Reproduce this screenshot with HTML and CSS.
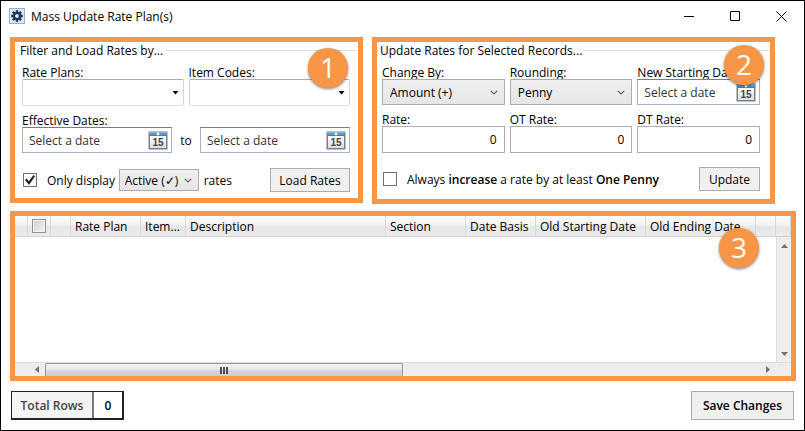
FILE: index.html
```html
<!DOCTYPE html>
<html lang="en">
<head>
  <meta charset="UTF-8" />
  <meta name="viewport" content="width=device-width, initial-scale=1.0" />
  <title>Mass Update Rate Plan(s)</title>
  <link rel="stylesheet" href="styles.css">
</head>
<body>
<svg width="0" height="0" class="defs" aria-hidden="true">
  <defs>
    <linearGradient id="cal-blue" x1="0" y1="0" x2="0" y2="1">
      <stop offset="0" stop-color="#8ab4dc" />
      <stop offset="1" stop-color="#3a78b4" />
    </linearGradient>
    <linearGradient id="cal-page" x1="0" y1="0" x2="0" y2="1">
      <stop offset="0" stop-color="#ffffff" />
      <stop offset="1" stop-color="#dcdcdc" />
    </linearGradient>
    <symbol id="calendar" viewBox="0 0 20 19">
      <rect x="0.5" y="0.5" width="19" height="18" fill="#7b7f86" />
      <rect x="1" y="1" width="18" height="4" fill="url(#cal-blue)" />
      <circle cx="10" cy="3" r="1.4" fill="#fff" />
      <rect x="2" y="5" width="16" height="12" fill="url(#cal-page)" />
      <text x="10" y="15" text-anchor="middle" class="cal-num">15</text>
    </symbol>
    <symbol id="triangle" viewBox="0 0 7 4"><path d="M0.5 0h6L3.5 3.5z" fill="#000" /></symbol>
    <symbol id="chevron" viewBox="0 0 8 5"><path d="M0.8 0.8L4 4 7.2 0.8" fill="none" stroke="#606060" stroke-width="1.2" /></symbol>
  </defs>
</svg>

<div class="window">
  <header class="titlebar">
    <svg class="app-icon" width="16" height="16" viewBox="0 0 16 16" aria-hidden="true">
      <rect x="0.5" y="0.5" width="15" height="15" fill="#dce6f0" stroke="#9fb0c4" />
      <g stroke="#17365d" stroke-width="2.4">
        <path d="M8 2.2v11.6M2.2 8h11.6M3.9 3.9l8.2 8.2M12.1 3.9l-8.2 8.2" />
      </g>
      <circle cx="8" cy="8" r="4" fill="#17365d" />
      <circle cx="8" cy="8" r="1.9" fill="#dce6f0" />
    </svg>
    <h1>Mass Update Rate Plan(s)</h1>
    <div class="window-buttons">
      <button type="button" aria-label="Minimize"><svg width="11" height="11" viewBox="0 0 11 11"><path d="M0 5.5h10" /></svg></button>
      <button type="button" aria-label="Maximize"><svg width="11" height="11" viewBox="0 0 11 11"><path d="M0.5 0.5h9v9h-9z" /></svg></button>
      <button type="button" aria-label="Close"><svg width="11" height="11" viewBox="0 0 11 11"><path d="M0.5 0.5l10 10M10.5 0.5l-10 10" /></svg></button>
    </div>
  </header>

  <main>
    <div class="panels">
      <section class="panel panel-filter">
        <span class="badge">1</span>
        <fieldset>
          <legend>Filter and Load Rates by...</legend>
          <div class="row">
            <div class="field">
              <label for="rate-plans">Rate Plans:</label>
              <div class="control combo">
                <select id="rate-plans"><option></option></select>
                <svg class="arrow" width="7" height="4"><use href="#triangle" /></svg>
              </div>
            </div>
            <div class="field">
              <label for="item-codes">Item Codes:</label>
              <div class="control combo">
                <select id="item-codes"><option></option></select>
                <svg class="arrow" width="7" height="4"><use href="#triangle" /></svg>
              </div>
            </div>
          </div>
          <div class="dates">
            <div class="field">
              <label for="date-from">Effective Dates:</label>
              <div class="control date">
                <input type="text" id="date-from" placeholder="Select a date" />
                <button type="button" aria-label="Open calendar"><svg width="20" height="19"><use href="#calendar" /></svg></button>
              </div>
            </div>
            <label class="to" for="date-to">to</label>
            <div class="field">
              <div class="control date">
                <input type="text" id="date-to" placeholder="Select a date" />
                <button type="button" aria-label="Open calendar"><svg width="20" height="19"><use href="#calendar" /></svg></button>
              </div>
            </div>
          </div>
          <div class="actions">
            <input type="checkbox" id="only" checked />
            <label for="only">Only display</label>
            <div class="drop status">
              <select id="status" aria-label="Status"><option>Active (✓)</option></select>
              <svg class="arrow" width="8" height="5"><use href="#chevron" /></svg>
            </div>
            <label for="status">rates</label>
            <button type="button" class="btn btn-load">Load Rates</button>
          </div>
        </fieldset>
      </section>

      <section class="panel panel-update">
        <span class="badge">2</span>
        <fieldset>
          <legend>Update Rates for Selected Records...</legend>
          <div class="row">
            <div class="field">
              <label for="change-by">Change By:</label>
              <div class="control drop">
                <select id="change-by"><option>Amount (+)</option></select>
                <svg class="arrow" width="8" height="5"><use href="#chevron" /></svg>
              </div>
            </div>
            <div class="field">
              <label for="rounding">Rounding:</label>
              <div class="control drop">
                <select id="rounding"><option>Penny</option></select>
                <svg class="arrow" width="8" height="5"><use href="#chevron" /></svg>
              </div>
            </div>
            <div class="field">
              <label for="new-start">New Starting Date:</label>
              <div class="control date">
                <input type="text" id="new-start" placeholder="Select a date" />
                <button type="button" aria-label="Open calendar"><svg width="20" height="19"><use href="#calendar" /></svg></button>
              </div>
            </div>
          </div>
          <div class="row">
            <div class="field">
              <label for="rate">Rate:</label>
              <input type="text" class="control number" id="rate" value="0" />
            </div>
            <div class="field">
              <label for="ot-rate">OT Rate:</label>
              <input type="text" class="control number" id="ot-rate" value="0" />
            </div>
            <div class="field">
              <label for="dt-rate">DT Rate:</label>
              <input type="text" class="control number" id="dt-rate" value="0" />
            </div>
          </div>
          <div class="actions">
            <input type="checkbox" id="always" />
            <label for="always">Always <b>increase</b> a rate by at least <b>One Penny</b></label>
            <button type="button" class="btn btn-update">Update</button>
          </div>
        </fieldset>
      </section>
    </div>

    <section class="panel panel-grid">
      <span class="badge">3</span>
      <table>
        <colgroup>
          <col class="c-edge"><col class="c-check"><col class="c-gap"><col class="c-plan"><col class="c-item"><col class="c-desc">
          <col class="c-section"><col class="c-basis"><col class="c-date"><col class="c-date"><col class="c-gap"><col>
        </colgroup>
        <thead>
          <tr>
            <th></th>
            <th><input type="checkbox" aria-label="Select all" /></th>
            <th></th>
            <th>Rate Plan</th>
            <th>Item...</th>
            <th>Description</th>
            <th>Section</th>
            <th>Date Basis</th>
            <th>Old Starting Date</th>
            <th>Old Ending Date</th>
            <th></th>
            <th></th>
          </tr>
        </thead>
      </table>
      <div class="grid-body">
        <div class="grid-rows"></div>
        <div class="scroll-v">
          <svg width="7" height="4" viewBox="0 0 7 4"><path d="M0 4h7L3.5 0z" /></svg>
          <svg width="7" height="4" viewBox="0 0 7 4"><path d="M0 0h7L3.5 4z" /></svg>
        </div>
      </div>
      <div class="scroll-h">
        <svg width="4" height="7" viewBox="0 0 4 7"><path d="M4 0v7L0 3.5z" /></svg>
        <div class="track"><div class="thumb"><i></i><i></i><i></i></div></div>
        <svg width="4" height="7" viewBox="0 0 4 7"><path d="M0 0v7l4-3.5z" /></svg>
      </div>
    </section>
  </main>

  <footer>
    <div class="total"><span class="total-label">Total Rows</span><span class="total-value">0</span></div>
    <button type="button" class="btn btn-save">Save Changes</button>
  </footer>
</div>
</body>
</html>
```

FILE: styles.css
```css
* { box-sizing: border-box; margin: 0; padding: 0; }

body, input, select, button {
  font-family: "Open Sans", "Noto Sans", sans-serif;
  font-size: 12px;
  line-height: 15px;
  color: #000;
}
b { font-weight: 600; }

.defs { position: absolute; }

.window {
  display: flex;
  flex-direction: column;
  min-height: 100vh;
  border: 1px solid #000;
  background: #fff;
}

.titlebar {
  display: flex;
  align-items: center;
  height: 30px;
  padding: 0 17px 0 8px;
}
h1 {
  margin-left: 6px;
  font-size: 12px;
  font-weight: 400;
}
.app-icon { display: block; }
.window-buttons {
  display: flex;
  gap: 35px;
  margin-left: auto;
}
.window-buttons button {
  border: none;
  background: none;
}
.window-buttons svg {
  display: block;
  fill: none;
  stroke: #000;
  stroke-width: 1;
}

main {
  flex: 1;
  display: flex;
  flex-direction: column;
  gap: 7px;
  padding: 6px 8px 10px 9px;
}
.panels {
  display: flex;
  align-items: flex-start;
  gap: 9px;
  margin-right: 21px;
}
.panel {
  position: relative;
  min-width: 0;
  border: 5px solid #f79646;
}
.panel-filter { flex: 343 1 0; }
.panel-update { flex: 393 1 0; }

/* numbered callouts over the panels */
.badge {
  position: absolute;
  z-index: 1;
  width: 40px;
  height: 40px;
  border-radius: 50%;
  background: #f79646;
  box-shadow: 0 1px 3px rgba(0, 0, 0, 0.5);
  color: #fff;
  font-size: 28px;
  line-height: 38px;
  text-align: center;
}
.panel-filter .badge { top: 6px; right: 10px; }
.panel-update .badge { top: 3px; right: 6px; }
.panel-grid .badge { top: 12px; right: 32px; }

fieldset {
  min-width: 0;
  border: none;
  border-top: 1px solid #d5dfe5;
  padding: 5px 8px 6px 7px;
}
.panel-update fieldset { padding: 5px 10px 8px 5px; }
legend {
  margin-left: -4px;
  padding: 0 3px 0 2px;
  line-height: 17px;
}

.row {
  display: flex;
  gap: 5px;
  margin-bottom: 6px;
}
.field {
  flex: 1;
  min-width: 0;
}
.field label {
  display: block;
  padding-top: 2px;
  line-height: 13px;
}

.control {
  display: flex;
  position: relative;
  width: 100%;
  height: 27px;
  border: 1px solid #abadb3;
  background: #fff;
}
select {
  width: 100%;
  border: none;
  appearance: none;
  background: none;
  outline: none;
}
.arrow {
  position: absolute;
  top: 50%;
  margin-top: -2px;
  pointer-events: none;
}
.combo {
  border-color: #abadb3 #d0d4dc #dfe2e8;
  border-radius: 2px;
}
.combo .arrow { right: 4px; }
.drop {
  display: flex;
  position: relative;
  border: 1px solid #acacac;
  background: linear-gradient(#f0f0f0, #e5e5e5);
}
.drop .arrow { right: 6px; }
.drop select { padding-left: 7px; }
.control.drop { height: 26px; }

.date {
  align-items: center;
  height: 26px;
  border-color: #6f7f92 #a4b4c4 #a4b4c4;
}
.date input {
  flex: 1;
  min-width: 0;
  padding-left: 6px;
  border: none;
  background: none;
  outline: none;
}
.date input::placeholder {
  color: #333;
  opacity: 1;
}
.date button {
  margin-right: 3px;
  border: none;
  background: none;
}
.date svg { display: block; }
.cal-num {
  font-family: "Liberation Sans", Arial, sans-serif;
  font-size: 10px;
  font-weight: 700;
  fill: #444;
}
.number {
  padding-right: 7px;
  text-align: right;
}

.dates {
  display: flex;
  align-items: flex-end;
}
.to {
  width: 28px;
  padding-bottom: 5px;
  text-align: center;
}

.actions {
  display: flex;
  align-items: center;
  margin-top: 15px;
}
.row + .actions { margin-top: 14px; }

input[type="checkbox"] {
  position: relative;
  flex: none;
  width: 14px;
  height: 14px;
  margin: 0 10px 0 1px;
  border: 1px solid #707070;
  appearance: none;
  background: #fff;
}
input[type="checkbox"]:checked::after {
  content: "";
  position: absolute;
  inset: 1px;
  background: #212121;
  clip-path: polygon(0 50%, 15% 35%, 38% 62%, 85% 0, 100% 12%, 40% 100%);
}
.status {
  width: 80px;
  height: 22px;
  margin: 0 5px 0 auto;
}
.status select { padding-left: 5px; }

.btn {
  border: 1px solid #acacac;
  background: #f0f0f0;
}
.btn-load,
.btn-update {
  height: 24px;
  margin-left: auto;
}
.btn-load {
  width: 80px;
  margin-left: 38px;
}
.btn-update { width: 61px; }

.panel-grid {
  flex: 1;
  display: flex;
  flex-direction: column;
}
table {
  width: 100%;
  table-layout: fixed;
  border-collapse: separate;
  border-spacing: 0;
}
.c-edge { width: 13px; }
.c-check { width: 23px; }
.c-gap { width: 20px; }
.c-plan { width: 70px; }
.c-item { width: 45px; }
.c-desc { width: 200px; }
.c-section { width: 80px; }
.c-basis { width: 70px; }
.c-date { width: 110px; }
th {
  height: 21px;
  padding-left: 4px;
  overflow: hidden;
  border-right: 1px solid #d8d8d8;
  border-bottom: 1px solid #d0d0d0;
  background: linear-gradient(#fdfdfd, #f0f0f0 50%, #e6e6e6 51%, #ebebeb);
  font-weight: 400;
  text-align: left;
  white-space: nowrap;
}
th input[type="checkbox"] {
  display: block;
  margin: 0;
  border-color: #8e8f8f;
  background: linear-gradient(135deg, #cdd0d8, #f3f3f3);
  box-shadow: inset 0 0 0 1px #f4f4f4;
}

.grid-body {
  flex: 1;
  display: flex;
}
.grid-rows { flex: 1; }
.scroll-v {
  display: flex;
  flex-direction: column;
  justify-content: space-between;
  align-items: center;
  width: 15px;
  padding: 7px 0 6px;
  border-left: 1px solid #dcdcdc;
  background: #ededed;
}
.scroll-v path,
.scroll-h path { fill: #707070; }
.scroll-h {
  display: flex;
  align-items: center;
  height: 14px;
  padding: 0 21px 0 20px;
  border-top: 1px solid #dcdcdc;
  background: #ededed;
}
.track {
  flex: 1;
  align-self: stretch;
  margin: 0 6px;
}
.thumb {
  display: flex;
  align-items: center;
  justify-content: center;
  gap: 1px;
  width: 50%;
  height: 100%;
  border: 1px solid #979797;
  border-bottom: none;
  border-radius: 2px 2px 0 0;
  background: linear-gradient(#f3f3f3, #e8e8e9 50%, #d6d6d8 51%, #cdcdcf);
}
.thumb i {
  width: 2px;
  height: 7px;
  background: #4f4f4f;
}

footer {
  display: flex;
  justify-content: space-between;
  align-items: center;
  padding: 0 10px 10px;
}
.total {
  display: flex;
  height: 29px;
  border: 1px solid #222;
  border-width: 1px 2px 2px 1px;
  font-weight: 600;
  line-height: 27px;
}
.total-label {
  width: 82px;
  border-right: 2px solid #777;
  background: #f4f4f4;
  color: #444;
  text-align: center;
}
.total-value {
  width: 28px;
  text-align: center;
}
.btn-save {
  width: 103px;
  height: 29px;
  font-weight: 600;
}
```
